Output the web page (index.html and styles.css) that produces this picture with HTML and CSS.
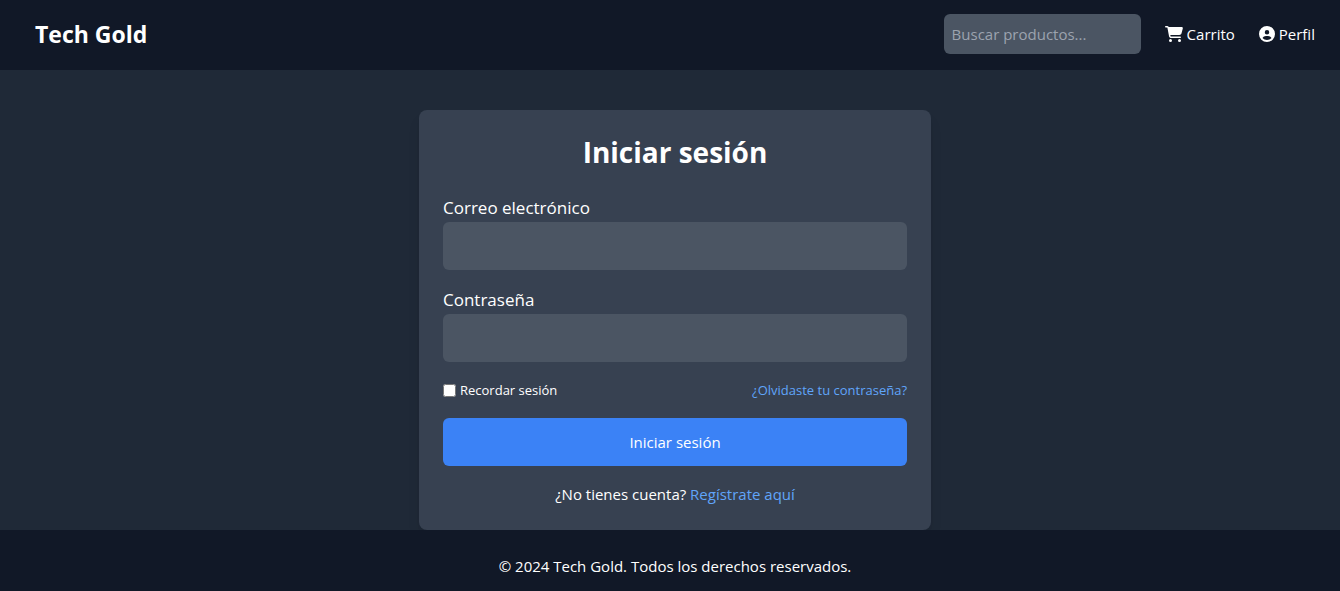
FILE: index.html
```html
<!DOCTYPE html>
<html lang="es">
<head>
  <meta charset="utf-8">
  <meta name="viewport" content="width=device-width, initial-scale=1">
  <title>Tech Gold - Iniciar sesión</title>
  <link rel="stylesheet" href="styles.css">
</head>
<body class="page">
  <header class="header">
    <a class="brand" href="#">Tech Gold</a>
    <nav class="nav">
      <input class="search" type="search" placeholder="Buscar productos..." aria-label="Buscar productos">
      <a class="nav-link" href="#">
        <svg class="icon icon-cart" viewBox="0 0 576 512" aria-hidden="true"><path d="M0 24C0 10.7 10.7 0 24 0H69.5c22 0 41.5 12.8 50.6 32h411c26.3 0 45.5 25 38.6 50.4l-41 152.3c-8.5 31.4-37 53.3-69.5 53.3H170.7l5.4 28.5c2.2 11.3 12.1 19.5 23.6 19.5H488c13.3 0 24 10.7 24 24s-10.7 24-24 24H199.7c-34.6 0-64.3-24.6-70.7-58.5L77.4 54.5c-.7-3.8-4-6.5-7.9-6.5H24C10.7 48 0 37.3 0 24zM128 464a48 48 0 1 1 96 0 48 48 0 1 1 -96 0zm336-48a48 48 0 1 1 0 96 48 48 0 1 1 0-96z"/></svg>
        Carrito
      </a>
      <a class="nav-link" href="#">
        <svg class="icon" viewBox="0 0 512 512" aria-hidden="true"><path d="M399 384.2C376.9 345.8 335.4 320 288 320H224c-47.4 0-88.9 25.8-111 64.2c35.2 39.2 86.2 63.8 143 63.8s107.8-24.7 143-63.8zM0 256a256 256 0 1 1 512 0A256 256 0 1 1 0 256zm256 16a72 72 0 1 0 0-144 72 72 0 1 0 0 144z"/></svg>
        Perfil
      </a>
    </nav>
  </header>

  <main class="main">
    <section class="card">
      <h1 class="title">Iniciar sesión</h1>
      <form class="form">
        <div class="field">
          <label class="label" for="email">Correo electrónico</label>
          <input class="input" type="email" id="email">
        </div>
        <div class="field">
          <label class="label" for="password">Contraseña</label>
          <input class="input" type="password" id="password">
        </div>
        <div class="options">
          <div class="remember">
            <input class="checkbox" type="checkbox" id="remember">
            <label for="remember">Recordar sesión</label>
          </div>
          <a class="link" href="#">¿Olvidaste tu contraseña?</a>
        </div>
        <button class="submit" type="submit">Iniciar sesión</button>
      </form>
      <p class="signup">¿No tienes cuenta? <a class="link" href="#">Regístrate aquí</a></p>
    </section>
  </main>

  <footer class="footer">
    <p class="copyright">© 2024 Tech Gold. Todos los derechos reservados.</p>
  </footer>
</body>
</html>
```

FILE: styles.css
```css
*,
*::before,
*::after {
  box-sizing: border-box;
}

.page {
  display: flex;
  flex-direction: column;
  min-height: 100vh;
  margin: 0;
  background: #1f2937;
  color: #fff;
  font-family: "Segoe UI", "Open Sans", "Noto Sans", sans-serif;
  font-size: 15px;
  line-height: 24px;
}

.header {
  display: flex;
  align-items: center;
  justify-content: space-between;
  padding: 14px 25px 16px 35px;
  background: #111827;
}

.brand {
  color: #fff;
  font-size: 23px;
  font-weight: 700;
  line-height: 32px;
  text-decoration: none;
}

.nav {
  display: flex;
  align-items: center;
  gap: 24px;
}

.search {
  width: 197px;
  height: 40px;
  padding: 8px;
  border: 0;
  border-radius: 6px;
  background: #4b5563;
  color: #fff;
  font: inherit;
}

.search::placeholder {
  color: #9ca3af;
}

.nav-link {
  display: flex;
  align-items: center;
  gap: 4px;
  color: #fff;
  text-decoration: none;
}

.icon {
  width: 16px;
  height: 16px;
  fill: currentColor;
}

.icon-cart {
  width: 18px;
}

.main {
  padding: 40px 0 0 10px;
}

.card {
  width: 100%;
  max-width: 512px;
  margin: 0 auto;
  padding: 24px;
  border-radius: 8px;
  background: #374151;
  box-shadow: 0 10px 15px -3px rgba(0, 0, 0, 0.1), 0 4px 6px -4px rgba(0, 0, 0, 0.1);
}

.title {
  margin: 0 0 24px;
  font-size: 28px;
  font-weight: 700;
  line-height: 36px;
  text-align: center;
}

.form {
  display: flex;
  flex-direction: column;
  gap: 16px;
}

.field {
  display: flex;
  flex-direction: column;
}

.label {
  font-size: 17px;
  line-height: 28px;
}

.input {
  width: 100%;
  height: 48px;
  padding: 12px;
  border: 0;
  border-radius: 6px;
  background: #4b5563;
  color: #fff;
  font: inherit;
}

.options {
  display: flex;
  align-items: center;
  justify-content: space-between;
  font-size: 13px;
}

.remember {
  display: flex;
  align-items: center;
  gap: 4px;
}

.checkbox {
  width: 13px;
  height: 13px;
  margin: 0;
}

.link {
  color: #60a5fa;
  text-decoration: none;
}

.submit {
  padding: 12px;
  border: 0;
  border-radius: 6px;
  background: #3b82f6;
  color: #fff;
  font: inherit;
  cursor: pointer;
}

.signup {
  margin: 16px 0 0;
  text-align: center;
}

.footer {
  flex: 1;
  padding: 24px 0 12px 10px;
  background: #111827;
  text-align: center;
}

.copyright {
  margin: 0;
}
```
